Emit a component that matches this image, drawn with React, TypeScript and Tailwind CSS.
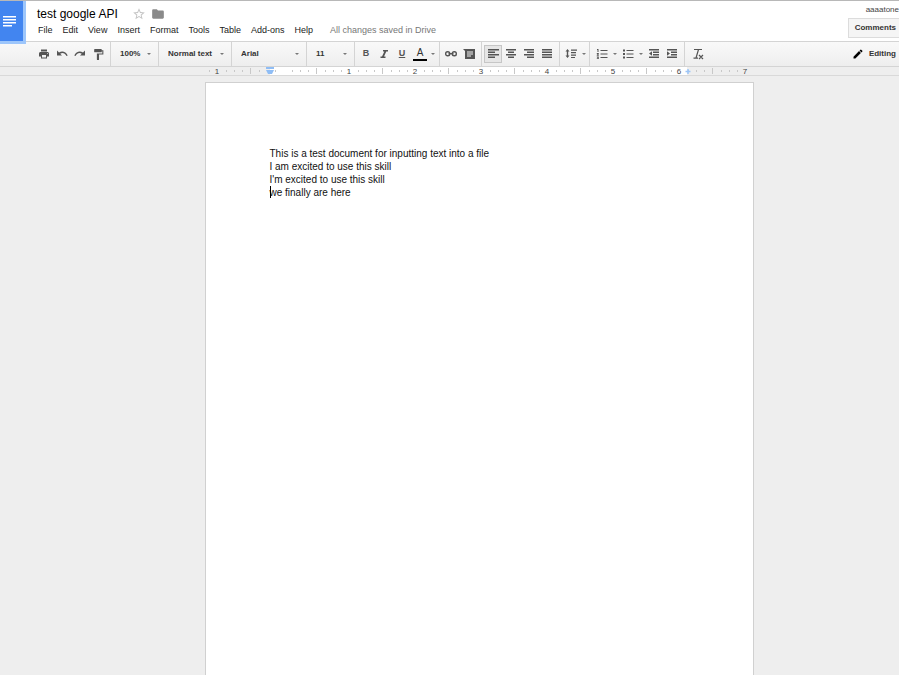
import type { ReactNode } from "react";
import { MdEdit, MdFolder, MdFormatPaint, MdPrint, MdStarBorder } from "react-icons/md";

const MENUS = ["File", "Edit", "View", "Insert", "Format", "Tools", "Table", "Add-ons", "Help"];

const LINES = [
  "This is a test document for inputting text into a file",
  "I am excited to use this skill",
  "I'm excited to use this skill",
  "we finally are here",
];

// [x, y, width] of each bar in a 12x12 icon
type Bar = [number, number, number];

const ALIGN_LEFT: Bar[] = [[1, 1, 11], [1, 3.5, 7], [1, 6, 11], [1, 8.5, 7]];
const ALIGN_CENTER: Bar[] = [[1, 1, 10], [3, 3.5, 6], [1, 6, 10], [3, 8.5, 6]];
const ALIGN_RIGHT: Bar[] = [[1, 1, 10], [4, 3.5, 7], [1, 6, 10], [4, 8.5, 7]];
const ALIGN_JUSTIFY: Bar[] = [[1, 1, 10], [1, 3.5, 10], [1, 6, 10], [1, 8.5, 10]];
const INDENT: Bar[] = [[1, 1, 10], [5, 3.5, 6], [5, 6, 6], [1, 8.5, 10]];

function Icon({ children }: { children: ReactNode }) {
  return (
    <svg className="h-3 w-3" viewBox="0 0 12 12" fill="currentColor" aria-hidden="true">
      {children}
    </svg>
  );
}

function Bars({ bars, children }: { bars: Bar[]; children?: ReactNode }) {
  return (
    <Icon>
      {bars.map(([x, y, w]) => (
        <rect key={y} x={x} y={y} width={w} height={1.5} />
      ))}
      {children}
    </Icon>
  );
}

function Caret() {
  return (
    <svg className="h-[2px] w-1" viewBox="0 0 4 2" fill="#777" aria-hidden="true">
      <path d="M0 0h4L2 2z" />
    </svg>
  );
}

function ToolButton({ label, active, children }: { label: string; active?: boolean; children: ReactNode }) {
  return (
    <button
      type="button"
      aria-label={label}
      className={`flex h-[18px] w-[18px] shrink-0 items-center justify-center ${
        active ? "border border-[#c6c6c6] bg-[#e6e6e6]" : ""
      }`}
    >
      {children}
    </button>
  );
}

function CaretButton({ label }: { label: string }) {
  return (
    <button type="button" aria-label={label} className="flex h-[18px] w-2 shrink-0 items-center justify-center">
      <Caret />
    </button>
  );
}

function ToolSelect({ label, value, width }: { label: string; value: string; width: string }) {
  return (
    <div className={`relative flex h-full shrink-0 items-center border-r border-[#d4d4d4] ${width}`}>
      <select
        aria-label={label}
        defaultValue={value}
        className="h-full w-full appearance-none bg-transparent pl-[9px] text-[8px] font-bold text-[#333] outline-none"
      >
        <option>{value}</option>
      </select>
      <span className="pointer-events-none absolute right-[7px]">
        <Caret />
      </span>
    </div>
  );
}

function Group({ width, children }: { width: string; children: ReactNode }) {
  return (
    <div className={`flex h-full shrink-0 items-center border-r border-[#d4d4d4] ${width}`}>{children}</div>
  );
}

function Ruler() {
  // 66px to the inch, eight ticks each
  const ticks = Array.from({ length: 67 }, (_, i) => i).filter((i) => i % 8 !== 1);
  return (
    <svg className="h-2 w-[549px] shrink-0" viewBox="0 0 549 8" aria-hidden="true">
      <rect x="65" width="417" height="8" fill="#fff" />
      {ticks.map((i) => {
        const half = i % 8 === 5;
        return (
          <rect
            key={i}
            x={Math.round(4 + i * 8.25)}
            y={half ? 1 : 3}
            width="1"
            height={half ? 6 : 2}
            fill="#c8c8c8"
          />
        );
      })}
      {[1, 0, 1, 2, 3, 4, 5, 6, 7].map((n, i) =>
        n === 0 ? null : (
          <text
            key={i}
            x={12 + i * 66}
            y="7"
            textAnchor="middle"
            fill="#444"
            className="font-['Liberation_Sans',Arial,sans-serif] text-[8px]"
          >
            {n}
          </text>
        ),
      )}
      <path d="M61 0h8v2h-8zM61 3h8l-2 4h-4z" fill="#8fbdf5" />
      <path d="M483 2v5M480.500 4.500h5" stroke="#9cc5f7" strokeWidth="1.500" fill="none" />
    </svg>
  );
}

function Header() {
  return (
    <header className="flex h-[41px] border-t border-[#b8b8b8] bg-white">
      <a
        href="#"
        aria-label="Docs home"
        className="z-10 flex h-[43px] w-[26px] shrink-0 items-center border-r-3 border-b-3 border-[#9dc6fb] bg-[#4285f0]"
      >
        <svg className="ml-[3px] h-[11px] w-[13px]" viewBox="0 0 13 11" fill="#fff" aria-hidden="true">
          <path d="M0 0h13v1.600H0zM0 3h13v1.600H0zM0 6h13v1.600H0zM0 9h9v1.600H0z" />
        </svg>
      </a>
      <div className="flex min-w-0 flex-1 flex-col pt-1 pl-[11px]">
        <div className="flex h-[18px] items-center">
          <h1 className="text-[12px] leading-[18px] whitespace-nowrap text-black">test google API</h1>
          <button type="button" aria-label="Star" className="ml-[14px]">
            <MdStarBorder className="h-[14px] w-[14px] text-[#c4c4c4]" />
          </button>
          <button type="button" aria-label="Move to folder" className="ml-[5px]">
            <MdFolder className="h-[14px] w-[14px] text-[#8a8a8a]" />
          </button>
        </div>
        <nav className="flex h-4 items-center gap-[10px] pl-px text-[9px] whitespace-nowrap text-[#222]">
          {MENUS.map((menu) => (
            <button key={menu} type="button">
              {menu}
            </button>
          ))}
          <span className="ml-[7px] text-[#777]">All changes saved in Drive</span>
        </nav>
      </div>
      <div className="flex shrink-0 flex-col items-end pt-[3px]">
        <span className="text-[8px] leading-[12px] text-[#444]">aaaatone</span>
        <button
          type="button"
          className="mt-[2px] h-5 border border-r-0 border-[#dcdcdc] bg-[#f5f5f5] pr-[3px] pl-[6px] text-[8px] font-bold text-[#333]"
        >
          Comments
        </button>
      </div>
    </header>
  );
}

function Toolbar() {
  return (
    <div
      role="toolbar"
      className="flex h-[26px] items-center border-y border-[#d4d4d4] bg-linear-to-b from-[#f9f9f9] to-[#eeeeee] text-[#555]"
    >
      <Group width="w-[111px] pl-[35px]">
        <ToolButton label="Print">
          <MdPrint className="h-3 w-3" />
        </ToolButton>
        <ToolButton label="Undo">
          <Icon>
            <path d="M1 2.500v5h5L4.200 5.700C6.500 4.200 9 5 10.500 8l1.200-.5C10 3.500 6 2.500 3 4.500z" />
          </Icon>
        </ToolButton>
        <ToolButton label="Redo">
          <Icon>
            <path d="M11 2.500v5H6l1.800-1.800C5.500 4.200 3 5 1.500 8L.3 7.500C2 3.500 6 2.500 9 4.500z" />
          </Icon>
        </ToolButton>
        <ToolButton label="Paint format">
          <MdFormatPaint className="h-[13px] w-[13px]" />
        </ToolButton>
      </Group>
      <ToolSelect label="Zoom" value="100%" width="w-[48px]" />
      <ToolSelect label="Styles" value="Normal text" width="w-[73px]" />
      <ToolSelect label="Font" value="Arial" width="w-[75px]" />
      <ToolSelect label="Font size" value="11" width="w-[48px]" />
      <Group width="w-[85px] pl-[2px]">
        <ToolButton label="Bold">
          <span className="text-[9px] font-black">B</span>
        </ToolButton>
        <ToolButton label="Italic">
          <Icon>
            <path d="M5 2h5v1.500H8.300L6 8.500h1.500V10h-5V8.500H4L6.300 3.500H5z" />
          </Icon>
        </ToolButton>
        <ToolButton label="Underline">
          <span className="text-[9px] font-bold underline">U</span>
        </ToolButton>
        <ToolButton label="Text color">
          <span className="w-[14px] border-b-2 border-black text-[10px] leading-[12px] text-[#333]">A</span>
        </ToolButton>
        <CaretButton label="Text color options" />
      </Group>
      <Group width="w-[42px] pl-[2px]">
        <ToolButton label="Insert link">
          <Icon>
            <g fill="none" stroke="currentColor" strokeWidth="1.400">
              <rect x="0.700" y="3.700" width="4" height="4" rx="1.800" />
              <rect x="7.300" y="3.700" width="4" height="4" rx="1.800" />
              <path d="M3.500 5.700h5" />
            </g>
          </Icon>
        </ToolButton>
        <ToolButton label="Insert comment">
          <Icon>
            <path d="M0 1h12v10H2V3zM4 3.500v1h6v-1zM4 5.500v1h6v-1zM4 7.500v1h4v-1z" fillRule="evenodd" />
          </Icon>
        </ToolButton>
      </Group>
      <Group width="w-[78px] pl-[2px]">
        <ToolButton label="Left align" active>
          <Bars bars={ALIGN_LEFT} />
        </ToolButton>
        <ToolButton label="Center align">
          <Bars bars={ALIGN_CENTER} />
        </ToolButton>
        <ToolButton label="Right align">
          <Bars bars={ALIGN_RIGHT} />
        </ToolButton>
        <ToolButton label="Justify">
          <Bars bars={ALIGN_JUSTIFY} />
        </ToolButton>
      </Group>
      <Group width="w-[30px] pl-[2px]">
        <ToolButton label="Line spacing">
          <Icon>
            <path d="M2.500 1l2 2.500H3.200v4H4.500l-2 2.500-2-2.500h1.300v-4H.5zM6 1.500h6v1.300H6zM6 4h5v1.300H6zM6 6.500h5v1.300H6zM6 9h4v1H6z" />
          </Icon>
        </ToolButton>
        <CaretButton label="Line spacing options" />
      </Group>
      <Group width="w-[95px] pl-[3px]">
        <ToolButton label="Numbered list">
          <Icon>
            <path d="M4.500 2h7v1h-7zM4.500 5.500h7v1h-7zM4.500 9h7v1h-7zM1 1h1.500v3h-1V2H1zM.8 5h2v1.500l-1 .5h1v.7h-2v-1l1-.8h-1zM.8 8.500h2V11h-2v-.7h1V10H1v-.5h.8v-.3h-1z" />
          </Icon>
        </ToolButton>
        <CaretButton label="Numbered list options" />
        <ToolButton label="Bulleted list">
          <Icon>
            <path d="M4.500 2h7v1h-7zM4.500 5.500h7v1h-7zM4.500 9h7v1h-7zM1 1.500h2v2H1zM1 5h2v2H1zM1 8.500h2v2H1z" />
          </Icon>
        </ToolButton>
        <CaretButton label="Bulleted list options" />
        <ToolButton label="Decrease indent">
          <Bars bars={INDENT}>
            <path d="M4 3.300v4.400L1 5.500z" />
          </Bars>
        </ToolButton>
        <ToolButton label="Increase indent">
          <Bars bars={INDENT}>
            <path d="M1 3.300v4.400l3-2.200z" />
          </Bars>
        </ToolButton>
      </Group>
      <div className="flex flex-1 items-center pl-1">
        <ToolButton label="Clear formatting">
          <Icon>
            <path
              d="M2 1.500h8M6.500 1.500L4 10M1.500 10.200h4.500M7 7l4 4M11 7l-4 4"
              fill="none"
              stroke="currentColor"
              strokeWidth="1.200"
            />
          </Icon>
        </ToolButton>
      </div>
      <button type="button" className="flex shrink-0 items-center gap-[5px] pr-[3px] text-[8px] font-bold text-[#333]">
        <MdEdit className="h-3 w-3 text-black" />
        Editing
      </button>
    </div>
  );
}

export default function App() {
  return (
    <div className="flex min-h-screen flex-col overflow-x-hidden bg-[#eeeeee] font-['Liberation_Sans',Arial,sans-serif]">
      <Header />
      <Toolbar />
      <div className="flex justify-center border-b border-[#d9d9d9] pl-[59px]">
        <Ruler />
      </div>
      <main className="flex flex-1 justify-center pt-[6px] pl-[59px]">
        <div className="w-[549px] shrink-0 border border-b-0 border-[#d0d0d0] bg-white px-16 pt-16">
          <div
            role="textbox"
            aria-label="Document body"
            aria-multiline="true"
            contentEditable
            suppressContentEditableWarning
            className="text-[10px] leading-[13px] text-[#111] outline-none"
          >
            {LINES.map((line, i) => (
              <p key={line} className="relative">
                {i === LINES.length - 1 && <span className="absolute top-0 left-0 h-3 w-px bg-black" />}
                {line}
              </p>
            ))}
          </div>
        </div>
      </main>
    </div>
  );
}
